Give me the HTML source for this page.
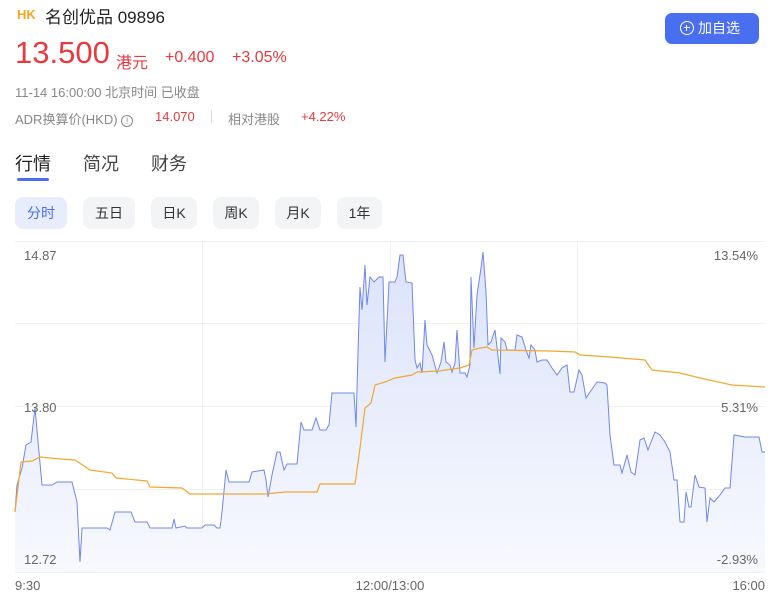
<!DOCTYPE html>
<html><head><meta charset="utf-8"><style>
*{margin:0;padding:0;box-sizing:border-box}
body{width:777px;height:605px;background:#fff;font-family:"Liberation Sans","Noto Sans CJK SC",sans-serif;position:relative;overflow:hidden;color:#333}
.a{position:absolute;white-space:nowrap}
.red{color:#e8393d}
.tab{position:absolute;top:197px;height:32px;border-radius:8px;background:#f3f4f6;font-size:14px;color:#333;text-align:center;line-height:32px}
</style></head><body>
<div class="a" style="left:17px;top:7px;font-size:13px;font-weight:bold;color:#f5a623">HK</div>
<div class="a" style="left:45px;top:3px;font-size:17px;color:#222">名创优品 09896</div>
<div class="a red" style="left:15px;top:35px;font-size:31px">13.500</div>
<div class="a red" style="left:116px;top:49px;font-size:16px">港元</div>
<div class="a red" style="left:165px;top:49px;font-size:16px">+0.400</div>
<div class="a red" style="left:232px;top:49px;font-size:16px">+3.05%</div>
<div class="a" style="left:15px;top:82px;font-size:13px;color:#888">11-14 16:00:00 北京时间 已收盘</div>
<div class="a" style="left:15px;top:109px;font-size:13px;color:#888">ADR换算价(HKD) <span style="display:inline-block;width:12px;height:12px;border:1px solid #888;border-radius:50%;font-size:9px;line-height:10px;text-align:center;vertical-align:0">!</span></div>
<div class="a red" style="left:155px;top:109px;font-size:13px">14.070</div>
<div class="a" style="left:211px;top:110px;width:1px;height:13px;background:#ddd"></div>
<div class="a" style="left:228px;top:109px;font-size:13px;color:#888">相对港股</div>
<div class="a red" style="left:301px;top:109px;font-size:13px">+4.22%</div>
<div class="a" style="left:665px;top:13px;width:94px;height:31px;background:#4a6ef0;border-radius:7px;color:#fff;font-size:14px;line-height:31px;padding-left:15px"><span style="display:inline-block;width:14px;height:14px;border:1.6px solid #fff;border-radius:50%;vertical-align:-2px;position:relative;margin-right:4px"><span style="position:absolute;left:2.5px;top:4.8px;width:6px;height:1.6px;background:#fff"></span><span style="position:absolute;left:4.8px;top:2.5px;width:1.6px;height:6px;background:#fff"></span></span>加自选</div>
<div class="a" style="left:15px;top:150px;font-size:18px;color:#222">行情</div>
<div class="a" style="left:83px;top:150px;font-size:18px;color:#444">简况</div>
<div class="a" style="left:151px;top:150px;font-size:18px;color:#444">财务</div>
<div class="a" style="left:17px;top:178px;width:32px;height:3px;background:#4a6ef0;border-radius:2px"></div>
<div class="tab" style="left:15px;width:52px;background:#e8edfd;color:#4a6ef0">分时</div>
<div class="tab" style="left:83px;width:52px">五日</div>
<div class="tab" style="left:151px;width:46px">日K</div>
<div class="tab" style="left:213px;width:46px">周K</div>
<div class="tab" style="left:275px;width:46px">月K</div>
<div class="tab" style="left:337px;width:45px">1年</div>
<svg class="a" style="left:0;top:0" width="777" height="605">
<defs><linearGradient id="g" x1="0" y1="0" x2="0" y2="1"><stop offset="0" stop-color="#dbe3fb"/><stop offset="1" stop-color="#f8f9fe"/></linearGradient></defs>
<g stroke="#f0f0f0" stroke-width="1">
<line x1="15" y1="241.5" x2="765" y2="241.5"/><line x1="15" y1="323.5" x2="765" y2="323.5"/><line x1="15" y1="406.5" x2="765" y2="406.5"/><line x1="15" y1="489.5" x2="765" y2="489.5"/><line x1="15" y1="572.5" x2="765" y2="572.5"/>
<line x1="202.5" y1="241" x2="202.5" y2="572"/><line x1="390.5" y1="241" x2="390.5" y2="572"/><line x1="577.5" y1="241" x2="577.5" y2="572"/>
</g>
<polyline id="p" fill="url(#g)" stroke="none" points="15,572 15,512 17,485 22,468 26,445 31,442 35,408 39,452 42,485 52,485 57,482 72,482 77,502 80,562 82,528 107,528 110,530 115,512 131,512 135,522 147,522 150,528 172,528 174,519 176,528 185,526 187,528 202,528 205,525 214,525 217,528 220,528 222,512 226,470 229,482 249,482 252,472 264,470 266,480 268,497 272,475 277,452 280,452 284,470 287,464 297,464 301,422 304,430 312,430 316,418 320,430 326,430 329,425 332,393 354,393 356,427 358,352 360,287 362,310 365,265 367,305 370,277 374,282 379,277 383,277 385,362 389,282 395,282 397,277 400,255 403,255 406,282 412,283 415,360 417,368 420,363 422,373 425,320 427,345 432,355 437,373 441,362 444,342 446,362 450,365 452,372 455,363 457,330 460,373 465,373 467,377 470,365 471,277 474,348 477,295 481,268 483,252 486,292 488,345 491,342 495,330 500,374 501,338 505,342 507,350 515,350 517,335 522,337 526,350 529,358 531,345 535,350 537,362 542,360 547,360 552,368 557,375 562,368 567,365 570,392 574,392 579,370 582,375 586,398 590,392 597,382 605,383 607,385 610,435 614,465 620,465 622,473 627,455 631,472 635,475 640,440 644,438 648,450 651,442 655,432 660,435 665,442 670,452 674,480 677,480 680,522 684,522 686,492 689,507 691,507 695,475 699,487 705,488 707,522 710,498 714,502 720,495 725,488 730,488 734,435 745,437 759,437 762,452 765,452 765,572"/>
<polyline fill="none" stroke="#7088e6" stroke-width="1" points="15,512 17,485 22,468 26,445 31,442 35,408 39,452 42,485 52,485 57,482 72,482 77,502 80,562 82,528 107,528 110,530 115,512 131,512 135,522 147,522 150,528 172,528 174,519 176,528 185,526 187,528 202,528 205,525 214,525 217,528 220,528 222,512 226,470 229,482 249,482 252,472 264,470 266,480 268,497 272,475 277,452 280,452 284,470 287,464 297,464 301,422 304,430 312,430 316,418 320,430 326,430 329,425 332,393 354,393 356,427 358,352 360,287 362,310 365,265 367,305 370,277 374,282 379,277 383,277 385,362 389,282 395,282 397,277 400,255 403,255 406,282 412,283 415,360 417,368 420,363 422,373 425,320 427,345 432,355 437,373 441,362 444,342 446,362 450,365 452,372 455,363 457,330 460,373 465,373 467,377 470,365 471,277 474,348 477,295 481,268 483,252 486,292 488,345 491,342 495,330 500,374 501,338 505,342 507,350 515,350 517,335 522,337 526,350 529,358 531,345 535,350 537,362 542,360 547,360 552,368 557,375 562,368 567,365 570,392 574,392 579,370 582,375 586,398 590,392 597,382 605,383 607,385 610,435 614,465 620,465 622,473 627,455 631,472 635,475 640,440 644,438 648,450 651,442 655,432 660,435 665,442 670,452 674,480 677,480 680,522 684,522 686,492 689,507 691,507 695,475 699,487 705,488 707,522 710,498 714,502 720,495 725,488 730,488 734,435 745,437 759,437 762,452 765,452"/>
<polyline fill="none" stroke="#f0a830" stroke-width="1.2" points="15,512 21,462 32,461 40,457 60,459 75,460 90,470 112,473 116,478 147,481 150,487 182,488 190,494 265,494 285,492 317,492 320,484 355,484 360,448 365,408 371,403 375,385 385,382 395,378 412,375 417,372 440,371 445,370 460,368 469,365 472,350 480,348 487,347 492,350 550,351 575,352 580,355 610,357 645,360 652,370 680,373 700,378 732,385 765,387"/>
<g font-family="Liberation Sans,sans-serif" font-size="13" fill="#666">
<text x="24" y="260">14.87</text><text x="24" y="412">13.80</text><text x="24" y="564">12.72</text>
<text x="758" y="260" text-anchor="end">13.54%</text><text x="758" y="412" text-anchor="end">5.31%</text><text x="758" y="564" text-anchor="end">-2.93%</text>
<text x="15" y="590">9:30</text><text x="390" y="590" text-anchor="middle">12:00/13:00</text><text x="765" y="590" text-anchor="end">16:00</text>
</g>
</svg>
</body></html>
